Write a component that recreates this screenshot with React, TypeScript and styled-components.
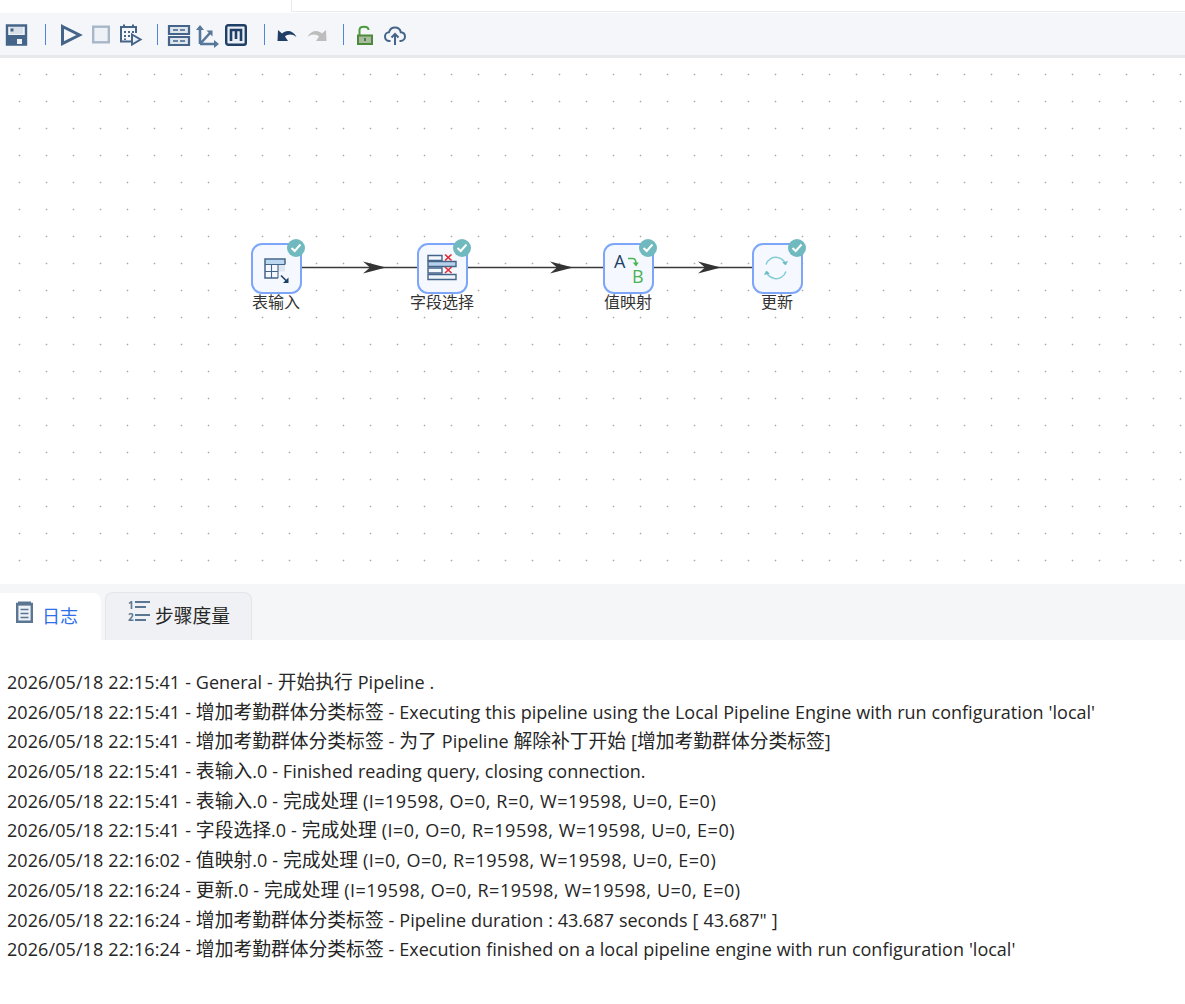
import React from 'react';
import styled, { createGlobalStyle } from 'styled-components';

const GlobalStyle = createGlobalStyle`
    html, body {
        margin: 0;
        padding: 0;
        background: #fff;
    }
    body {
        font-family: "Open Sans", "Noto Sans CJK SC", sans-serif;
        color: #262626;
    }
`;

const INK = '#44648a';
const NAVY = '#1f3f66';
const SLATE = '#5b7692';

const SaveIcon = () => (
    <svg width="22" height="22" viewBox="0 0 22 22">
        <path d="M2 1.500h19v19H2z" fill="#eef2f6" stroke={INK} strokeWidth="2.400" />
        <path d="M5 3h13v7H5z" fill="#d7dfe8" />
        <path d="M5.500 4.500h3v3h-3z" fill={INK} />
        <path d="M3 11h17v9H3z" fill={INK} />
        <path d="M12 15h5v5h-5z" fill="#eef2f6" />
    </svg>
);

const PlayIcon = () => (
    <svg width="22" height="22" viewBox="0 0 22 22">
        <path d="M2.500 2.500L19.500 11 2.500 19.500z" fill="none" stroke={INK} strokeWidth="3" />
    </svg>
);

const StopIcon = () => (
    <svg width="22" height="22" viewBox="0 0 22 22">
        <rect x="3.200" y="2.700" width="15.600" height="15.600" fill="#eef2f6" stroke="#a7b7c9" strokeWidth="2.400" />
    </svg>
);

const ScheduleIcon = () => (
    <svg width="22" height="22" viewBox="0 0 22 22">
        <path d="M14 17.500H1V3h15v6" fill="none" stroke={INK} strokeWidth="2" />
        <path d="M4 0.500v3.500M13 0.500v3.500" stroke={INK} strokeWidth="2" />
        <path d="M4 7h2v2H4zM8 7h2v2H8zM12 7h2v2h-2zM4 11h2v2H4zM8 11h2v2H8zM4 14.500h2v1.500H4z" fill={INK} />
        <path d="M12 10.500l8.500 5-8.500 5z" fill="#eef2f6" stroke={INK} strokeWidth="2" />
    </svg>
);

const GroupIcon = () => (
    <svg width="22" height="22" viewBox="0 0 22 22">
        <path d="M1 2h20v8H1zM1 13h20v8H1z" fill="#dfe5ec" stroke={INK} strokeWidth="2.200" />
        <path d="M5 6h5M12 6h5M5 17h5M12 17h5" stroke={INK} strokeWidth="1.500" />
    </svg>
);

const AxisIcon = () => (
    <svg width="22" height="22" viewBox="0 0 22 22">
        <path d="M3 20V3M3 20h17M3 20L13 9" fill="none" stroke="#56779a" strokeWidth="2.600" />
        <path d="M-1 6l4-5 4 5zM17 16l5 4-5 4zM9.500 6.500h6v6z" fill="#56779a" />
    </svg>
);

const ModelIcon = () => (
    <svg width="22" height="22" viewBox="0 0 22 22">
        <rect x="1.200" y="1.200" width="19.600" height="19.600" rx="2" fill="#e9eef4" stroke={NAVY} strokeWidth="2.400" />
        <path d="M6 17V6h10v11M11 6v9" fill="none" stroke={NAVY} strokeWidth="2.600" />
    </svg>
);

const UndoIcon = () => (
    <svg width="22" height="22" viewBox="0 0 22 22">
        <path d="M6 9.500C10 5.500 17 6 20.500 13 16.500 9.800 12 9.800 9 12.500l3 4.500H1.500L2 6z" fill={NAVY} />
    </svg>
);

const RedoIcon = () => (
    <svg width="22" height="22" viewBox="0 0 22 22">
        <path d="M16 9.500C12 5.500 5 6 1.500 13 5.500 9.800 10 9.800 13 12.500L10 17h10.500L20 6z" fill="#bdbdbd" />
    </svg>
);

const LockIcon = () => (
    <svg width="22" height="22" viewBox="0 0 22 22">
        <path d="M5.500 11V6C5.500 1.500 14.500 1.500 14.500 6" fill="none" stroke="#4c9a3f" strokeWidth="2" />
        <path d="M4 11.500h14v8.500H4z" fill="#a9ba9f" stroke="#4c8a3c" strokeWidth="2" />
        <path d="M11 14v3" stroke="#2f6a2a" strokeWidth="1.500" />
    </svg>
);

const CloudIcon = () => (
    <svg width="22" height="22" viewBox="0 0 22 22">
        <path
            d="M6.500 17H5.500C2.800 17 1 15 1 12.500S3 8.200 5 8.200C6 4.800 8.500 3.500 11 3.500c3 0 5.300 2 5.800 4.700 2.500.2 4.200 2.100 4.200 4.400S19 17 16.500 17h-1"
            fill="none"
            stroke={INK}
            strokeWidth="2"
        />
        <path d="M11 21V10.500M7.500 13.500L11 10l3.500 3.500" fill="none" stroke={INK} strokeWidth="2" />
    </svg>
);

const TableStepIcon = () => (
    <svg width="26" height="28" viewBox="-1 -2.500 26 28" overflow="visible">
        <path d="M1 2h20v5H1z" fill="#bcd8f0" />
        <path d="M14 7h7v7h-7z" fill="#dfe7ee" />
        <path d="M21 7V1.500H1V20.500h13" fill="none" stroke={INK} strokeWidth="1.500" />
        <path d="M1 7h20M1 14h13M7.500 7v13.500M14 7v13.500" fill="none" stroke={INK} strokeWidth="1.100" />
        <path d="M17 18l6 6" stroke={NAVY} strokeWidth="1.600" />
        <path d="M24.500 20v5.500H19z" fill={NAVY} />
    </svg>
);

const FieldStepIcon = () => (
    <svg width="30" height="26" viewBox="0 2 30 26" overflow="visible">
        <path d="M1 1.500h14v5H1zM1 14h14v5H1z" fill="#f4f7fb" stroke={INK} strokeWidth="1.400" />
        <path d="M1 7.500h28v5H1z" fill="#b6d2ea" stroke={INK} strokeWidth="1.400" />
        <path d="M1 20.500h28v5H1z" fill="#eef4fa" stroke={INK} strokeWidth="1.400" />
        <path d="M18 0.500l6.500 6M24.500 0.500l-6.500 6M18 13l6.500 6M24.500 13l-6.500 6" stroke="#e0313a" strokeWidth="1.700" />
    </svg>
);

const RefreshStepIcon = () => (
    <svg width="28" height="26" viewBox="1 1 28 26" overflow="visible">
        <path d="M4 9.500C6 4 11 1.500 15.500 2.500c4 .8 7 3.500 8 7" fill="none" stroke="#86ccd2" strokeWidth="1.500" />
        <path d="M24 16.500C22 22 17 24.500 12.500 23.500c-4-.8-7-3.500-8-7" fill="none" stroke="#86ccd2" strokeWidth="1.500" />
        <path d="M20 7.500l3.800 2.800 2.200-4.300zM8 18.500l-3.800-2.800L2 20z" fill="#6cbcc5" />
    </svg>
);

const MapStepIcon = () => (
    <MapStep>
        <MapFrom>A</MapFrom>
        <svg width="12" height="12" viewBox="0 0 12 12">
            <path d="M1 2.500h4.500c2.500 0 3.500 1.500 3.500 5" fill="none" stroke="#4bb257" strokeWidth="1.500" />
            <path d="M5.800 6.500l3.200 4 2.800-4z" fill="#4bb257" />
        </svg>
        <MapTo>B</MapTo>
    </MapStep>
);

const CheckBadge = () => (
    <Badge>
        <svg width="12" height="10" viewBox="0 0 12 10">
            <path d="M1.500 5l3.200 3 5.800-6.500" fill="none" stroke="#fff" strokeWidth="2" />
        </svg>
    </Badge>
);

const LogIcon = () => (
    <svg width="17" height="22" viewBox="0 0 17 22">
        <path d="M1.200 3h14.600v17.800H1.200z" fill="#eef1f5" stroke={SLATE} strokeWidth="2.400" />
        <path d="M2 0.500h13v4H2z" fill={SLATE} />
        <path d="M4.500 8.500h8M4.500 12.500h8M4.500 16.500h8" stroke={SLATE} strokeWidth="1.700" />
    </svg>
);

const MetricsIcon = () => (
    <svg width="23" height="24" viewBox="0 0 23 24">
        <MetricsDigit x="1" y="9">1</MetricsDigit>
        <MetricsDigit x="1" y="21">2</MetricsDigit>
        <path d="M8 2h15M8 7h11M8 15h15M8 20h11" stroke={SLATE} strokeWidth="2" />
    </svg>
);

const tools = [
    [<SaveIcon />],
    [<PlayIcon />, <StopIcon />, <ScheduleIcon />],
    [<GroupIcon />, <AxisIcon />, <ModelIcon />],
    [<UndoIcon />, <RedoIcon />],
    [<LockIcon />, <CloudIcon />],
];

const groupSpacing = [
    { gap: 0, before: 0, after: 18 },
    { gap: 8, before: 14, after: 15 },
    { gap: 6.500, before: 10, after: 17 },
    { gap: 8, before: 11, after: 15 },
    { gap: 8, before: 10, after: 0 },
];

const nodes = [
    { name: '表输入', x: 251, icon: <TableStepIcon /> },
    { name: '字段选择', x: 417, icon: <FieldStepIcon /> },
    { name: '值映射', x: 603, icon: <MapStepIcon /> },
    { name: '更新', x: 752, icon: <RefreshStepIcon /> },
];

const edges = [
    { from: 301, to: 417, tip: 386 },
    { from: 467, to: 603, tip: 573 },
    { from: 653, to: 752, tip: 721 },
];

const logs = [
    "2026/05/18 22:15:41 - General - 开始执行 Pipeline .",
    "2026/05/18 22:15:41 - 增加考勤群体分类标签 - Executing this pipeline using the Local Pipeline Engine with run configuration 'local'",
    '2026/05/18 22:15:41 - 增加考勤群体分类标签 - 为了 Pipeline 解除补丁开始 [增加考勤群体分类标签]',
    '2026/05/18 22:15:41 - 表输入.0 - Finished reading query, closing connection.',
    '2026/05/18 22:15:41 - 表输入.0 - 完成处理 (I=19598, O=0, R=0, W=19598, U=0, E=0)',
    '2026/05/18 22:15:41 - 字段选择.0 - 完成处理 (I=0, O=0, R=19598, W=19598, U=0, E=0)',
    '2026/05/18 22:16:02 - 值映射.0 - 完成处理 (I=0, O=0, R=19598, W=19598, U=0, E=0)',
    '2026/05/18 22:16:24 - 更新.0 - 完成处理 (I=19598, O=0, R=19598, W=19598, U=0, E=0)',
    '2026/05/18 22:16:24 - 增加考勤群体分类标签 - Pipeline duration : 43.687 seconds [ 43.687" ]',
    "2026/05/18 22:16:24 - 增加考勤群体分类标签 - Execution finished on a local pipeline engine with run configuration 'local'",
];

// the date, the chinese runs and the counters each need their own size to keep the line widths
const LogText = ({ text }: { text: string }) => (
    <LogLine>
        <DateStamp>{text.slice(0, 19)}</DateStamp>
        {text
            .slice(19)
            .split(/([\u4e00-\u9fff]+|\(I=.*\))/)
            .map((part, i) => {
                if (i % 2 === 0) return part;
                return part[0] === '(' ? <Counters key={i}>{part}</Counters> : <Cjk key={i}>{part}</Cjk>;
            })}
    </LogLine>
);

const App = () => (
    <Page>
        <GlobalStyle />
        <TopStrip>
            <TopTabEdge />
        </TopStrip>
        <Toolbar>
            {tools.map((group, i) => (
                <React.Fragment key={i}>
                    {i > 0 && (
                        <Separator
                            $before={groupSpacing[i - 1].after}
                            $after={groupSpacing[i].before}
                        />
                    )}
                    <ToolGroup $gap={groupSpacing[i].gap}>
                        {group.map((icon, j) => (
                            <ToolButton key={j}>{icon}</ToolButton>
                        ))}
                    </ToolGroup>
                </React.Fragment>
            ))}
        </Toolbar>
        <Canvas>
            {edges.map(edge => {
                const width = edge.to - edge.from;
                const tip = edge.tip - edge.from;
                return (
                    <Edge
                        key={edge.from}
                        width={width}
                        height="15"
                        viewBox={`0 0 ${width} 15`}
                        style={{ left: edge.from }}
                    >
                        <path d={`M0 7.500H${width}`} stroke="#3a3a3a" strokeWidth="1.500" />
                        <path
                            d={`M${tip - 23} 1.500L${tip} 7.500 ${tip - 23} 13.500 ${tip - 16} 7.500z`}
                            fill="#333"
                        />
                    </Edge>
                );
            })}
            {nodes.map(node => (
                <Node key={node.name} style={{ left: node.x }}>
                    <NodeBox>
                        {node.icon}
                        <CheckBadge />
                    </NodeBox>
                    <NodeLabel>{node.name}</NodeLabel>
                </Node>
            ))}
        </Canvas>
        <TabBar>
            <ActiveTab>
                <LogIcon />
                <span>日志</span>
            </ActiveTab>
            <Tab>
                <MetricsIcon />
                <span>步骤度量</span>
            </Tab>
        </TabBar>
        <LogPanel>
            {logs.map((line, i) => (
                <LogText key={i} text={line} />
            ))}
        </LogPanel>
    </Page>
);

const Page = styled.div`
    width: 1185px;
    height: 1004px;
    overflow: hidden;
    display: flex;
    flex-direction: column;
    background: #fff;
`;

const TopStrip = styled.div`
    height: 13px;
    padding-left: 291px;
    box-sizing: border-box;
`;

const TopTabEdge = styled.div`
    height: 12px;
    border-left: 1px solid #e9ebee;
    border-bottom: 1px solid #e9ebee;
    box-sizing: border-box;
`;

const Toolbar = styled.div`
    height: 45px;
    box-sizing: border-box;
    padding: 1px 0 0 5px;
    display: flex;
    align-items: center;
    background: #f4f6f9;
    border-bottom: 3px solid #e8e9ea;
`;

const ToolGroup = styled.div<{ $gap: number }>`
    display: flex;
    gap: ${p => p.$gap}px;
`;

const ToolButton = styled.div`
    width: 22px;
    height: 22px;
    display: flex;

    svg {
        display: block;
        overflow: visible;
    }
`;

const Separator = styled.div<{ $before: number; $after: number }>`
    width: 1px;
    height: 21px;
    margin: 0 ${p => p.$after}px 0 ${p => p.$before}px;
    background: #4f86d8;
`;

const Canvas = styled.div`
    position: relative;
    height: 526px;
    background-color: #fff;
    background-image: radial-gradient(circle at center, #a9a9a9 0, #b5b5b5 0.8px, transparent 1.1px);
    background-size: 27px 27px;
    background-position: 6px 3px;
`;

const Edge = styled.svg`
    position: absolute;
    top: 202px;
`;

const Node = styled.div`
    position: absolute;
    top: 185px;
    width: 50px;
    display: flex;
    flex-direction: column;
    align-items: center;
`;

const NodeBox = styled.div`
    position: relative;
    width: 51px;
    height: 51px;
    flex: none;
    box-sizing: border-box;
    display: flex;
    align-items: center;
    justify-content: center;
    background: #f5f9ff;
    border: 2px solid #7ea6f8;
    border-radius: 11px;
`;

const Badge = styled.div`
    position: absolute;
    top: -6px;
    right: -5px;
    width: 18px;
    height: 18px;
    border-radius: 50%;
    background: #6fb9bf;
    display: flex;
    align-items: center;
    justify-content: center;
`;

const NodeLabel = styled.div`
    margin-top: -2px;
    white-space: nowrap;
    font-family: "Noto Sans CJK SC", sans-serif;
    font-size: 16px;
    line-height: 18px;
    color: #333;
`;

const MapStep = styled.div`
    position: relative;
    width: 32px;
    height: 34px;
    font-size: 18px;
    line-height: 18px;

    svg {
        position: absolute;
        top: 4px;
        left: 15px;
    }
`;

const MapFrom = styled.span`
    position: absolute;
    left: 2px;
    top: 0;
    color: #1f3f66;
`;

const MapTo = styled.span`
    position: absolute;
    left: 20px;
    top: 15px;
    color: #4bb257;
`;

const MetricsDigit = styled.text`
    font-family: "Open Sans", sans-serif;
    font-size: 10px;
    font-weight: 700;
    fill: ${SLATE};
`;

const TabBar = styled.div`
    height: 56px;
    box-sizing: border-box;
    padding-top: 8px;
    display: flex;
    align-items: flex-end;
    gap: 4px;
    background: #f5f6f8;
`;

const ActiveTab = styled.div`
    width: 101px;
    height: 47px;
    box-sizing: border-box;
    padding: 0 0 4px 16px;
    display: flex;
    align-items: center;
    gap: 9px;
    background: #fff;
    border-top-right-radius: 8px;
    color: #2f6fed;
    font-family: "Noto Sans CJK SC", sans-serif;
    font-size: 18px;

    svg {
        margin-bottom: 5px;
    }
`;

const Tab = styled.div`
    width: 147px;
    height: 48px;
    box-sizing: border-box;
    padding: 0 0 4px 21px;
    display: flex;
    align-items: center;
    gap: 5px;
    background: #eff1f4;
    border: 1px solid #e3e5e9;
    border-bottom: none;
    border-radius: 8px 8px 0 0;
    color: #262626;
    font-family: "Noto Sans CJK SC", sans-serif;
    font-size: 18.750px;

    svg {
        margin-bottom: 5px;
        overflow: visible;
    }
`;

const LogPanel = styled.div`
    padding: 26px 0 0 7px;
    background: #fff;
`;

const LogLine = styled.div`
    height: 29.700px;
    line-height: 29.700px;
    font-size: 18px;
    word-spacing: 0.250px;
    white-space: nowrap;
    color: #262626;
`;

const DateStamp = styled.span`
    letter-spacing: 0.080px;
`;

const Cjk = styled.span`
    font-family: "Noto Sans CJK SC", sans-serif;
    font-size: 18.800px;
`;

const Counters = styled.span`
    letter-spacing: 0.500px;
`;

export default App;
